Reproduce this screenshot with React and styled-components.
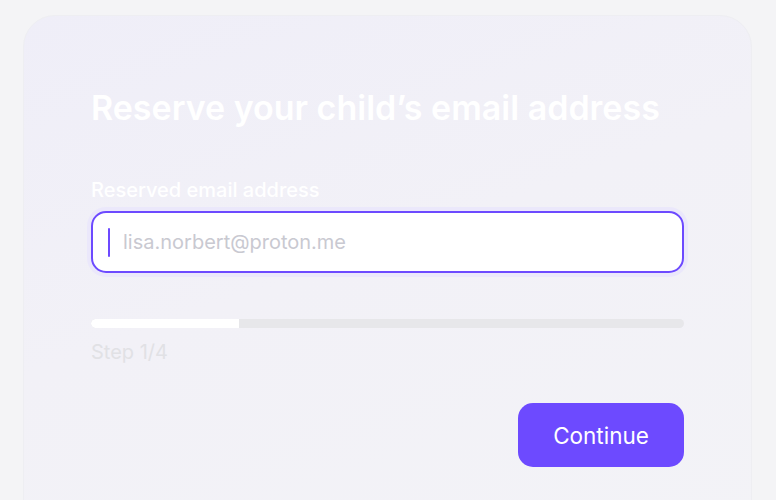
import React from 'react';
import styled, { createGlobalStyle } from 'styled-components';

const GlobalStyle = createGlobalStyle`
  html, body {
    margin: 0;
    padding: 0;
    background: #f4f4f6;
    font-family: Inter, "Noto Sans", sans-serif;
    overflow: hidden;
  }
`;

const Page = styled.div`
  padding: 15px 24px 0 23px;
  height: 500px;
  box-sizing: border-box;
`;

const Card = styled.section`
  height: 540px;
  box-sizing: border-box;
  padding: 71px 67px 0 67px;
  border-radius: 32px;
  border: 1px solid #eeeef2;
  background: linear-gradient(160deg, #efeef8 0%, #f2f1f7 45%, #f3f3f7 100%);
  display: flex;
  flex-direction: column;
`;

const Title = styled.h1`
  margin: 0;
  color: #ffffff;
  font-size: 34px;
  font-weight: 600;
  line-height: 41px;
`;

const Label = styled.label`
  margin-top: 50px;
  color: #ffffff;
  font-size: 20px;
  font-weight: 500;
  line-height: 24px;
`;

const InputWrap = styled.div`
  margin-top: 9px;
  height: 62px;
  box-sizing: border-box;
  border: 2px solid #6d4aff;
  border-radius: 15px;
  background: #ffffff;
  box-shadow: 0 0 0 4px #ebe8fb;
  display: flex;
  align-items: center;
  padding-left: 15px;
`;

const Caret = styled.span`
  width: 2px;
  height: 29px;
  background: #6d4aff;
  border-radius: 1px;
  margin-right: 13px;
`;

const Placeholder = styled.span`
  color: #c9c9d1;
  font-size: 20px;
  line-height: 24px;
`;

const Track = styled.div`
  margin-top: 46px;
  height: 9px;
  border-radius: 5px;
  background: #e7e7ea;
  overflow: hidden;
`;

const Fill = styled.div`
  height: 100%;
  background: #ffffff;
  border-radius: 5px 0 0 5px;
`;

const Step = styled.div`
  margin-top: 12px;
  color: #e1e1e5;
  font-size: 20px;
  line-height: 24px;
`;

const Actions = styled.div`
  margin-top: 39px;
  display: flex;
  justify-content: flex-end;
`;

const Button = styled.button`
  width: 166px;
  height: 64px;
  border: none;
  border-radius: 15px;
  background: #6d4aff;
  color: #ffffff;
  font-family: Inter, "Noto Sans", sans-serif;
  font-size: 22.5px;
  font-weight: 400;
  cursor: pointer;
`;

export default function App() {
  const step = 1;
  const total = 4;
  return (
    <Page>
      <GlobalStyle />
      <Card>
        <Title>Reserve your child’s email address</Title>
        <Label>Reserved email address</Label>
        <InputWrap>
          <Caret />
          <Placeholder>lisa.norbert@proton.me</Placeholder>
        </InputWrap>
        <Track>
          <Fill style={{ width: `${(step / total) * 100}%` }} />
        </Track>
        <Step>Step {step}/{total}</Step>
        <Actions>
          <Button>Continue</Button>
        </Actions>
      </Card>
    </Page>
  );
}
